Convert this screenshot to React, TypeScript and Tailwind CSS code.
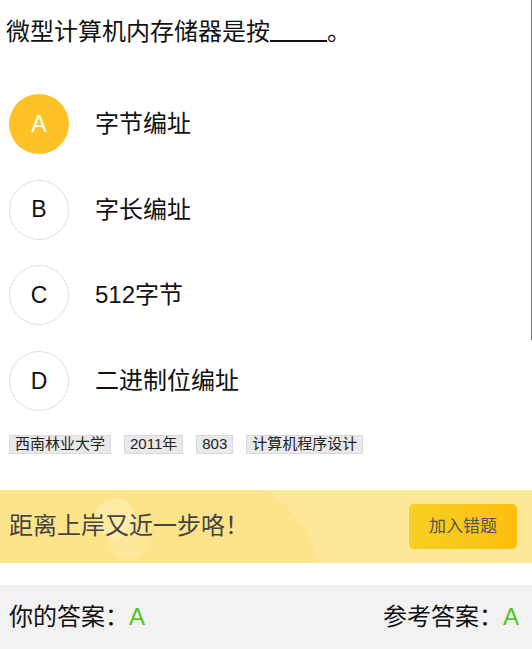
import React from 'react';

const options = [
  { key: 'A', text: '字节编址', active: true },
  { key: 'B', text: '字长编址', active: false },
  { key: 'C', text: '512字节', active: false },
  { key: 'D', text: '二进制位编址', active: false },
];

const tags = ['西南林业大学', '2011年', '803', '计算机程序设计'];

export default function App() {
  return (
    <div
      className="relative w-[532px] h-[649px] overflow-hidden bg-white text-[#111]"
      style={{ fontFamily: '"Liberation Sans", "Noto Sans CJK SC", sans-serif' }}
    >
      <div className="absolute right-0 top-0 w-px h-[340px] bg-[#777]" />

      <div className="pt-[17px] pl-[6px] text-[24px] leading-[30px]">
        微型计算机内存储器是按
        <span className="inline-block w-[57px] h-[24px] border-b-2 border-[#111] align-[-2px]" />
        。
      </div>

      <div className="mt-[34px] flex flex-col">
        {options.map((o) => (
          <div key={o.key} className="flex items-center h-[85.7px]">
            <div
              className={
                o.active
                  ? 'ml-[9px] w-[60px] h-[60px] rounded-full bg-[#fec226] text-white flex items-center justify-center text-[23px]'
                  : 'ml-[9px] w-[60px] h-[60px] rounded-full border border-[#dedede] text-[#111] flex items-center justify-center text-[23px]'
              }
            >
              {o.key}
            </div>
            <div className="ml-[26px] text-[24px]">{o.text}</div>
          </div>
        ))}
      </div>

      <div className="mt-[11px] pl-[9px] flex gap-[13px]">
        {tags.map((t) => (
          <span
            key={t}
            className="h-[19px] px-[5px] flex items-center bg-[#e9e9e9] border border-[#dadada] text-[15px] text-[#222]"
          >
            {t}
          </span>
        ))}
      </div>

      <div className="relative mt-[36px] h-[73px] bg-[#fee99a] overflow-hidden flex items-center justify-between">
        <div className="absolute left-[-60px] top-[-40px] w-[380px] h-[260px] rounded-[50%] bg-[#fde48a]" />
        <div className="absolute left-[95px] top-[8px] w-[40px] h-[40px] rounded-full bg-[#fff3c4] opacity-40" />
        <div className="absolute left-[108px] top-[28px] w-[40px] h-[40px] rounded-full bg-[#fff3c4] opacity-30" />
        <div className="relative pl-[9px] text-[24px] text-[#444]">距离上岸又近一步咯！</div>
        <button className="relative mr-[15px] w-[108px] h-[45px] rounded-[5px] bg-gradient-to-r from-[#f6d022] to-[#fdbe0c] text-[17px] text-[#555]">
          加入错题
        </button>
      </div>

      <div className="mt-[22px] h-[65px] bg-[#f2f2f2] flex items-center justify-between px-[9px] pr-[13px] text-[24px]">
        <div>
          你的答案：<span className="text-[#52c41a]">A</span>
        </div>
        <div>
          参考答案：<span className="text-[#52c41a]">A</span>
        </div>
      </div>
    </div>
  );
}
